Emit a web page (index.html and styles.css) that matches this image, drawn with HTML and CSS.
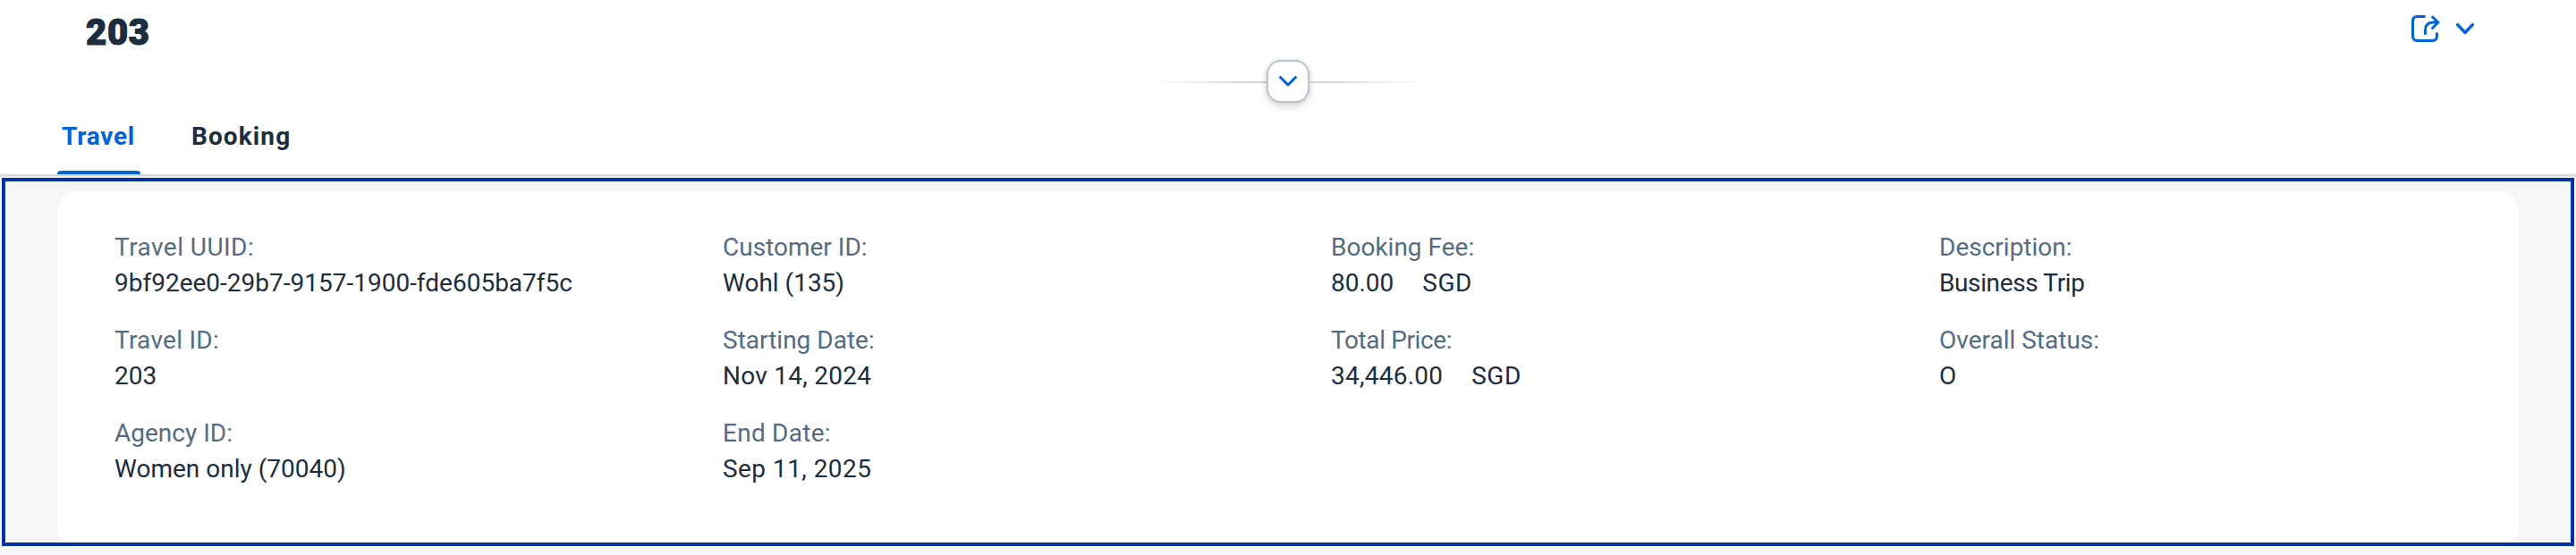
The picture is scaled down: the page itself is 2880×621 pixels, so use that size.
FILE: index.html
```html
<!DOCTYPE html>
<html lang="en">
<head>
<meta charset="utf-8">
<title>Travel 203</title>
<link rel="stylesheet" href="styles.css">
</head>
<body>
<div class="page">
  <header class="header">
    <div class="title-bar">
      <h1 class="title">203</h1>
      <div class="actions">
        <svg class="icon-share" viewBox="0 0 32 30" width="32" height="30"><path d="M14.500 1.500H6.500Q1.500 1.500 1.500 6.500V23.500Q1.500 28.500 6.500 28.500H23.500Q28.500 28.500 28.500 23.500V20.500M15.500 20.500V17Q15.500 8 24 8H30M23.500 2 30 8 23.500 14.500"/></svg>
        <svg class="icon-chevron" viewBox="0 0 20 13" width="20" height="13"><path d="M1.600 1.700 10 10.500 18.400 1.700"/></svg>
      </div>
    </div>
    <div class="expander">
      <span class="line line-left"></span>
      <button class="expand-button" aria-label="Expand header"><svg viewBox="0 0 20 12" width="20" height="12"><path d="M1.500 1.500 10 10 18.500 1.500"/></svg></button>
      <span class="line line-right"></span>
    </div>
    <nav class="tabs">
      <a class="tab selected">Travel</a>
      <a class="tab booking">Booking</a>
    </nav>
  </header>
  <main class="section">
    <div class="card">
      <div class="column">
        <div class="field"><div class="label wider">Travel UUID:</div><div class="value">9bf92ee0-29b7-9157-1900-fde605ba7f5c</div></div>
        <div class="field"><div class="label wide">Travel ID:</div><div class="value">203</div></div>
        <div class="field"><div class="label">Agency ID:</div><div class="value">Women only (70040)</div></div>
      </div>
      <div class="column">
        <div class="field"><div class="label">Customer ID:</div><div class="value">Wohl (135)</div></div>
        <div class="field"><div class="label">Starting Date:</div><div class="value wide">Nov 14, 2024</div></div>
        <div class="field"><div class="label wide">End Date:</div><div class="value wider">Sep 11, 2025</div></div>
      </div>
      <div class="column">
        <div class="field"><div class="label">Booking Fee:</div><div class="value amount"><span>80.00</span><span class="wider">SGD</span></div></div>
        <div class="field"><div class="label tight">Total Price:</div><div class="value amount"><span class="wide">34,446.00</span><span class="wider">SGD</span></div></div>
      </div>
      <div class="column">
        <div class="field"><div class="label">Description:</div><div class="value tight">Business Trip</div></div>
        <div class="field"><div class="label">Overall Status:</div><div class="value">O</div></div>
      </div>
    </div>
  </main>
</div>
</body>
</html>
```
FILE: styles.css
```css
* { box-sizing: border-box; }
body { margin: 0; background: #f5f6f7; color: #1d2d3e; font: 28px/40px Roboto, "Noto Sans", sans-serif; }
.page { height: 621px; overflow: hidden; }
.header { height: 197px; background: #fff; border-bottom: 2px solid #d9d9d9; box-shadow: 0 2px 0 #e9eaeb; }
.title-bar { height: 67px; padding: 13px 114px 0 96px; display: flex; justify-content: space-between; }
.title { margin: 0; font-size: 40px; line-height: 48px; font-weight: 900; letter-spacing: .7px; -webkit-text-stroke: 1.2px #1d2d3e; }
.actions { display: flex; align-items: flex-start; gap: 18px; padding-top: 4px; }
svg { display: block; fill: none; stroke: #0064d9; stroke-width: 3; stroke-linecap: round; stroke-linejoin: round; }
.icon-chevron { margin-top: 9px; }
.icon-chevron path { stroke-width: 3.4; }
.expander { height: 48px; display: flex; align-items: center; justify-content: center; }
.line { width: 128px; height: 2px; margin-top: 2px; }
.line-left { background: linear-gradient(to right, transparent, #d0d0d0); }
.line-right { background: linear-gradient(to left, transparent, #d0d0d0); }
.expand-button { width: 48px; height: 48px; padding: 0; display: flex; align-items: center; justify-content: center; background: #fff; border: 2px solid #bcc3ca; border-radius: 16px; box-shadow: 0 4px 8px rgba(85, 107, 130, .25), 0 0 4px rgba(85, 107, 130, .15); }
.tabs { height: 80px; padding-left: 64px; display: flex; gap: 51px; font-weight: 700; letter-spacing: .75px; }
.tab { height: 80px; padding: 18px 6px 0; white-space: nowrap; }
.tab.booking { letter-spacing: 1.1px; }
.tab.selected { width: 93px; padding-left: 5px; color: #0064d9; position: relative; }
.tab.selected::after { content: ""; position: absolute; left: 0; right: 0; bottom: 0; height: 4px; border-radius: 4px 4px 0 0; background: #0064d9; }
.section { position: relative; height: 412px; margin: 2px 2px 0; padding: 14px 62px; }
.section::after { content: ""; position: absolute; inset: 0; border: 4px solid #0032a0; pointer-events: none; }
.card { height: 400px; padding: 44px 0 0 64px; display: grid; grid-template-columns: repeat(4, 680px); background: #fff; border-radius: 24px; }
.column { display: flex; flex-direction: column; gap: 24px; }
.field { height: 80px; white-space: nowrap; }
.label { color: #556b82; }
.amount { display: flex; gap: 32px; }
.wide { letter-spacing: .25px; }
.wider { letter-spacing: .45px; }
.tight { letter-spacing: -.38px; }
```
